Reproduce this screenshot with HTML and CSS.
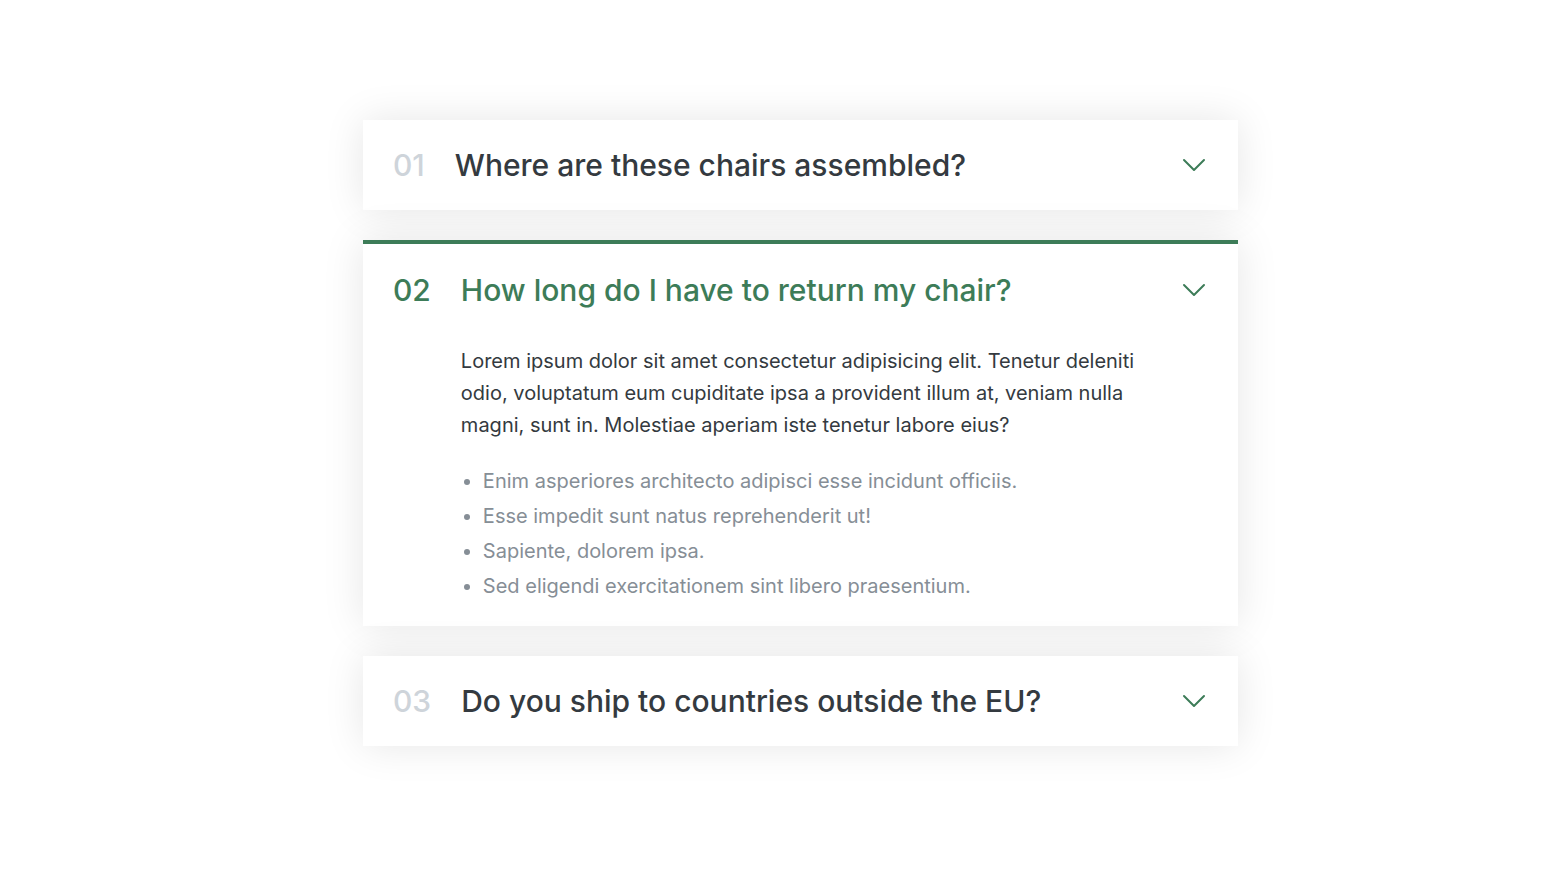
FILE: index.html
```html
<!DOCTYPE html>
<html lang="en">
<head>
<meta charset="UTF-8">
<title>Accordion</title>
<link rel="stylesheet" href="styles.css">
</head>
<body>
<div class="accordion">
  <div class="item">
    <p class="number">01</p>
    <p class="text">Where are these chairs assembled?</p>
    <svg class="icon" viewBox="0 0 24 24" fill="none" stroke-width="1.5"><path stroke-linecap="round" stroke-linejoin="round" d="M19.5 8.25l-7.5 7.5-7.5-7.5"/></svg>
  </div>
  <div class="item open">
    <p class="number">02</p>
    <p class="text">How long do I have to return my chair?</p>
    <svg class="icon" viewBox="0 0 24 24" fill="none" stroke-width="1.5"><path stroke-linecap="round" stroke-linejoin="round" d="M19.5 8.25l-7.5 7.5-7.5-7.5"/></svg>
    <div class="hidden-box">
      <p>Lorem ipsum dolor sit amet consectetur adipisicing elit. Tenetur deleniti odio, voluptatum eum cupiditate ipsa a provident illum at, veniam nulla magni, sunt in. Molestiae aperiam iste tenetur labore eius?</p>
      <ul>
        <li>Enim asperiores architecto adipisci esse incidunt officiis.</li>
        <li>Esse impedit sunt natus reprehenderit ut!</li>
        <li>Sapiente, dolorem ipsa.</li>
        <li>Sed eligendi exercitationem sint libero praesentium.</li>
      </ul>
    </div>
  </div>
  <div class="item">
    <p class="number">03</p>
    <p class="text">Do you ship to countries outside the EU?</p>
    <svg class="icon" viewBox="0 0 24 24" fill="none" stroke-width="1.5"><path stroke-linecap="round" stroke-linejoin="round" d="M19.5 8.25l-7.5 7.5-7.5-7.5"/></svg>
  </div>
</div>
</body>
</html>
```

FILE: styles.css
```css
* {
  margin: 0;
  padding: 0;
  box-sizing: border-box;
}

html,
body {
  background: #fff;
}

body {
  font-family: Inter, "Noto Sans", sans-serif;
  color: #343a40;
  min-height: 873px;
  padding: 120px 0 120px 363px;
}

.accordion {
  width: 875px;
  display: flex;
  flex-direction: column;
  gap: 30px;
}

.item {
  background: #fff;
  box-shadow: 0 0 40px rgba(0, 0, 0, 0.1);
  padding: 24px 28px 24px 30px;
  border-top: 4px solid #fff;
  border-bottom: 4px solid #fff;
  display: grid;
  grid-template-columns: auto 1fr auto;
  column-gap: 30px;
  row-gap: 38px;
  align-items: center;
}

.number,
.text {
  font-size: 30px;
  font-weight: 500;
  line-height: 34px;
}

.number {
  color: #ced4da;
}

.icon {
  width: 32px;
  height: 32px;
  stroke: #3d7c58;
}

.hidden-box {
  grid-column: 2 / -1;
  font-size: 20px;
  padding-right: 60px;
}

.hidden-box p {
  line-height: 32px;
  margin-bottom: 30px;
}

.hidden-box ul {
  color: #868e96;
  margin-left: 22px;
  display: flex;
  flex-direction: column;
  gap: 15px;
}

.hidden-box li {
  line-height: 20px;
}

.open {
  border-top: 4px solid #3d7c58;
  padding-top: 29px;
  padding-bottom: 26px;
}

.open .number,
.open .text {
  color: #3d7c58;
}
```
